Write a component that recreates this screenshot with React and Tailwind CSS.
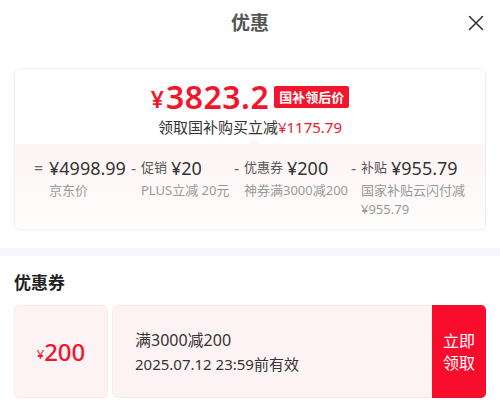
import React from "react";

export default function App() {
  return (
    <div className="w-[500px] h-[410px] bg-white overflow-hidden font-['Noto_Sans','Noto_Sans_CJK_SC',sans-serif] text-[#333]">
      {/* Header */}
      <div className="relative h-[46px] flex items-center justify-center">
        <span className="text-[19px] font-bold text-[#555]">优惠</span>
        <svg className="absolute right-[16px] top-[15px]" width="16" height="16" viewBox="0 0 16 16" fill="none">
          <path d="M1.5 1.5 L14.5 14.5 M14.5 1.5 L1.5 14.5" stroke="#333" strokeWidth="1.6" strokeLinecap="round" />
        </svg>
      </div>

      {/* Summary card */}
      <div className="mx-[14px] mt-[22px] h-[162px] rounded-[7px] border border-[#efefef] shadow-[0_1px_3px_rgba(0,0,0,0.04)] overflow-hidden flex flex-col">
        <div className="h-[75px] flex flex-col items-center pt-[10px]">
          <div className="h-[36px] flex items-center">
            <span className="text-[#f2152b] text-[23px] font-semibold leading-[28px] mt-[4px] mr-[2px]">¥</span>
            <span className="text-[#f2152b] text-[32px] font-semibold leading-[36px] tracking-[0.5px]">3823.2</span>
            <span className="ml-[5px] h-[22px] px-[5px] bg-[#f2152b] text-white text-[13px] font-bold leading-[22px] rounded-[2px]">国补领后价</span>
          </div>
          <div className="mt-[2px] text-[15px] leading-[20px] text-[#333]">
            领取国补购买立减<span className="text-[#f2152b]">¥1175.79</span>
          </div>
        </div>
        <div className="relative flex-1 bg-gradient-to-b from-[#fdf4f4] to-[#fffdfd] flex pl-[19px] pt-[12px]">
          <div className="absolute left-[235px] -top-[4px] w-[9px] h-[9px] bg-[#fdf4f4] rotate-45"></div>
          <Col sign="=" amount="¥4998.99" sub="京东价" w="w-[97px]" />
          <Col sign="-" label="促销" amount="¥20" sub="PLUS立减 20元" w="w-[103px]" />
          <Col sign="-" label="优惠券" amount="¥200" sub="神券满3000减200" w="w-[117px]" />
          <Col sign="-" label="补贴" amount="¥955.79" sub="国家补贴云闪付减¥955.79" w="w-[120px]" subW="w-[108px]" />
        </div>
      </div>

      {/* Divider band */}
      <div className="mt-[18px] h-[8px] bg-[#f5f6f9]"></div>

      {/* Coupon section */}
      <div className="px-[14px]">
        <div className="mt-[15px] text-[17px] leading-[24px] font-bold text-[#222]">优惠券</div>
        <div className="mt-[10px] h-[93px] flex gap-[4px]">
          <div className="w-[94px] rounded-[5px] bg-[#fdf3f4] border border-[#fbeaec] flex items-center justify-center">
            <span className="text-[#f2152b] text-[13px] mt-[6px]">¥</span>
            <span className="text-[#f2152b] text-[24px] font-medium leading-none">200</span>
          </div>
          <div className="flex-1 flex rounded-[5px] overflow-hidden">
            <div className="flex-1 bg-[#fdf3f4] border border-r-0 border-[#fbeaec] rounded-l-[5px] flex flex-col justify-center pl-[22px]">
              <div className="text-[16px] leading-[24px] text-[#333]">满3000减200</div>
              <div className="text-[15px] leading-[24px] text-[#333]">2025.07.12 23:59前有效</div>
            </div>
            <div className="w-[54px] bg-[#f90d2c] text-white text-[16px] leading-[22px] flex items-center justify-center text-center">
              立即<br />领取
            </div>
          </div>
        </div>
      </div>
    </div>
  );
}

function Col({ sign, label, amount, sub, w, subW }) {
  return (
    <div className={`${w} flex shrink-0`}>
      <span className={`text-[16px] leading-[24px] text-[#666] ${sign === "=" ? "w-[15px]" : "w-[10px]"}`}>{sign}</span>
      <div className="flex flex-col">
        <div className="flex items-center h-[24px] whitespace-nowrap">
          {label && <span className="text-[13px] text-[#555] mr-[4px]">{label}</span>}
          <span className="text-[18px] text-[#333]">{amount}</span>
        </div>
        <div className={`mt-[1px] text-[13px] leading-[19px] text-[#999] ${subW || "whitespace-nowrap"}`}>{sub}</div>
      </div>
    </div>
  );
}
